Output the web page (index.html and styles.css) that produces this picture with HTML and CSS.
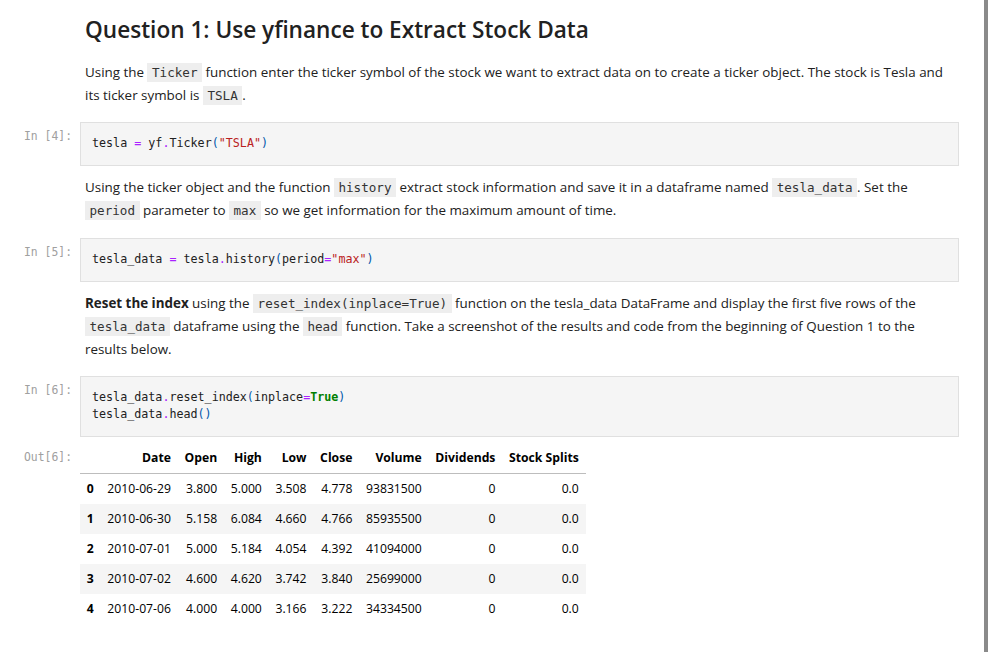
FILE: index.html
```html
<!DOCTYPE html>
<html>
<head>
<meta charset="utf-8">
<link rel="stylesheet" href="styles.css">
</head>
<body>
<div class="page">
  <div class="notebook">
    <div class="cell md first">
      <div class="prompt"></div>
      <div class="content">
        <h2 class="title">Question 1: Use yfinance to Extract Stock Data</h2>
        <p>Using the <code>Ticker</code> function enter the ticker symbol of the stock we want to extract data on to create a ticker object. The stock is Tesla and its ticker symbol is <code>TSLA</code>.</p>
      </div>
    </div>

    <div class="cell code-cell">
      <div class="prompt">In [4]:</div>
      <div class="input"><pre><span class="v">tesla</span> <span class="o">=</span> <span class="v">yf</span><span class="o">.</span><span class="v">Ticker</span><span class="b">(</span><span class="s">"TSLA"</span><span class="b">)</span></pre></div>
    </div>

    <div class="cell md">
      <div class="prompt"></div>
      <div class="content">
        <p>Using the ticker object and the function <code>history</code> extract stock information and save it in a dataframe named <code>tesla_data</code>. Set the <code>period</code> parameter to <code>max</code> so we get information for the maximum amount of time.</p>
      </div>
    </div>

    <div class="cell code-cell">
      <div class="prompt">In [5]:</div>
      <div class="input"><pre><span class="v">tesla_data</span> <span class="o">=</span> <span class="v">tesla</span><span class="o">.</span><span class="v">history</span><span class="b">(</span><span class="v">period</span><span class="o">=</span><span class="s">"max"</span><span class="b">)</span></pre></div>
    </div>

    <div class="cell md last">
      <div class="prompt"></div>
      <div class="content">
        <p><strong>Reset the index</strong> using the <code>reset_index(inplace=True)</code> function on the tesla_data DataFrame and display the first five rows of the <code>tesla_data</code> dataframe using the <code>head</code> function. Take a screenshot of the results and code from the beginning of Question 1 to the results below.</p>
      </div>
    </div>

    <div class="cell code-cell">
      <div class="prompt">In [6]:</div>
      <div class="input"><pre><span class="v">tesla_data</span><span class="o">.</span><span class="v">reset_index</span><span class="b">(</span><span class="v">inplace</span><span class="o">=</span><span class="k">True</span><span class="b">)</span>
<span class="v">tesla_data</span><span class="o">.</span><span class="v">head</span><span class="b">()</span></pre></div>
    </div>

    <div class="cell out-cell">
      <div class="prompt out">Out[6]:</div>
      <div class="output">
        <table class="df">
          <thead>
            <tr><th></th><th>Date</th><th>Open</th><th>High</th><th>Low</th><th>Close</th><th>Volume</th><th>Dividends</th><th>Stock Splits</th></tr>
          </thead>
          <tbody>
            <tr><th>0</th><td>2010-06-29</td><td>3.800</td><td>5.000</td><td>3.508</td><td>4.778</td><td>93831500</td><td>0</td><td>0.0</td></tr>
            <tr><th>1</th><td>2010-06-30</td><td>5.158</td><td>6.084</td><td>4.660</td><td>4.766</td><td>85935500</td><td>0</td><td>0.0</td></tr>
            <tr><th>2</th><td>2010-07-01</td><td>5.000</td><td>5.184</td><td>4.054</td><td>4.392</td><td>41094000</td><td>0</td><td>0.0</td></tr>
            <tr><th>3</th><td>2010-07-02</td><td>4.600</td><td>4.620</td><td>3.742</td><td>3.840</td><td>25699000</td><td>0</td><td>0.0</td></tr>
            <tr><th>4</th><td>2010-07-06</td><td>4.000</td><td>4.000</td><td>3.166</td><td>3.222</td><td>34334500</td><td>0</td><td>0.0</td></tr>
          </tbody>
        </table>
      </div>
    </div>
  </div>
  <div class="scrollbar"></div>
</div>
</body>
</html>
```
FILE: styles.css
```css
html, body {
  margin: 0;
  padding: 0;
  background: #ffffff;
}
.page {
  display: flex;
  width: 988px;
  height: 652px;
  overflow: hidden;
}
.notebook {
  width: 984px;
  flex: none;
  font-family: "Open Sans", "Noto Sans", sans-serif;
  font-size: 13.4px;
  color: #212121;
}
.scrollbar {
  width: 4px;
  flex: none;
  background: #8a8a8a;
}
.cell {
  display: flex;
  align-items: flex-start;
}
.prompt {
  width: 72px;
  flex: none;
  padding-right: 8px;
  padding-top: 6px;
  text-align: right;
  font-family: "DejaVu Sans Mono", monospace;
  font-size: 11.4px;
  line-height: 17px;
  color: #a0a0a0;
}
.content {
  width: 865px;
  padding: 10px 5px 16px;
}
.md.first .content {
  padding-top: 0;
  padding-bottom: 15px;
}
.md.last .content {
  padding-bottom: 15px;
}
.title {
  margin: 0;
  padding-top: 15px;
  font-size: 22.6px;
  font-weight: 600;
  line-height: 30px;
  color: #212121;
}
p {
  margin: 0;
  line-height: 23px;
}
.md.first p {
  margin-top: 16px;
}
code {
  display: inline-block;
  font-family: "DejaVu Sans Mono", monospace;
  font-size: 12.6px;
  line-height: 19px;
  background: #eeeeee;
  padding: 0 4.5px;
  color: #333;
}
strong { font-weight: 700; }
.input {
  width: 877px;
  background: #f5f5f5;
  border: 1px solid #e0e0e0;
}
pre {
  margin: 0;
  padding: 12px 11px 13px;
  font-family: "DejaVu Sans Mono", monospace;
  font-size: 11.7px;
  line-height: 17px;
  color: #212121;
}
.v { color: #212121; }
.o { color: #aa22ff; }
.b { color: #0055aa; }
.s { color: #ba2121; }
.k { color: #008000; font-weight: bold; }
.out-cell { margin-top: 6px; }
.prompt.out { padding-top: 6px; }
table.df {
  border-collapse: collapse;
  font-size: 12.2px;
  color: #000;
}
table.df th, table.df td {
  text-align: right;
  padding: 0 6.8px;
  height: 30px;
  line-height: 16px;
  white-space: nowrap;
}
table.df thead th {
  font-weight: bold;
  border-bottom: 1px solid #bdbdbd;
  vertical-align: middle;
}
table.df tbody th { font-weight: bold; }
table.df tbody tr:nth-child(odd) { background: #ffffff; }
table.df tbody tr:nth-child(even) { background: #f5f5f5; }
```
